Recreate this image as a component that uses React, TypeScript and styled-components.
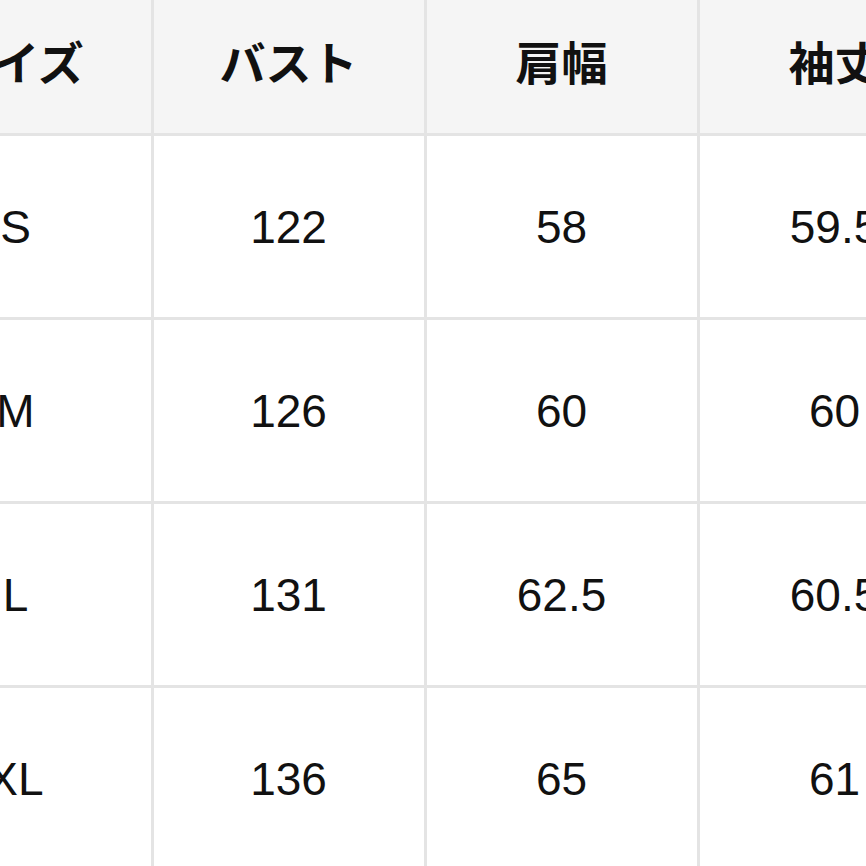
import React from 'react';
import styled, {createGlobalStyle} from "styled-components";

const GlobalStyle = createGlobalStyle`
    html, body {
        margin: 0;
        padding: 0;
        background: #FFFFFF;
        overflow: hidden;
    }
`

const headers = ['サイズ', 'バスト', '肩幅', '袖丈'];

const rows = [
    ['S', '122', '58', '59.5'],
    ['M', '126', '60', '60'],
    ['L', '131', '62.5', '60.5'],
    ['XL', '136', '65', '61'],
];

export default function App() {
    return (
        <Page>
            <GlobalStyle/>
            <SizeTable>
                {headers.map((h) => (
                    <HeadCell key={h}>{h}</HeadCell>
                ))}
                {rows.map((row) =>
                    row.map((value, i) => (
                        <Cell key={row[0] + i}>{value}</Cell>
                    ))
                )}
            </SizeTable>
        </Page>
    );
}

const Page = styled.div`
    width: 866px;
    height: 866px;
    overflow: hidden;
    background: #FFFFFF;
`

const SizeTable = styled.div`
    display: grid;
    grid-template-columns: repeat(4, 270px);
    grid-template-rows: 133px repeat(4, 181px);
    gap: 3px;
    background: #E4E4E4;
    margin-left: -119.5px;
    width: max-content;
`

const HeadCell = styled.div`
    display: flex;
    align-items: center;
    justify-content: center;
    padding-bottom: 13px;
    background: #F5F5F5;
    color: #111111;
    font-family: "Noto Sans CJK JP", sans-serif;
    font-weight: 700;
    font-size: 46px;
`

const Cell = styled.div`
    display: flex;
    align-items: center;
    justify-content: center;
    background: #FFFFFF;
    color: #111111;
    font-family: "Liberation Sans", Arial, sans-serif;
    font-size: 46px;
`
